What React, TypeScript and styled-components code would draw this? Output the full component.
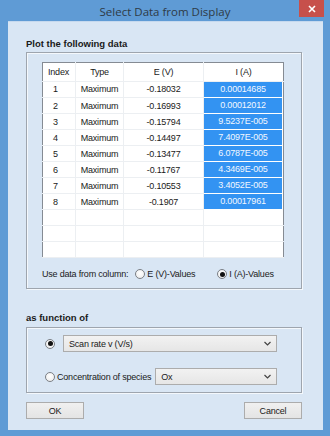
import React from "react";
import styled, { createGlobalStyle } from "styled-components";

const GlobalStyle = createGlobalStyle`
  html, body {
    margin: 0;
    padding: 0;
    background: #609bd6;
  }
  * {
    box-sizing: border-box;
  }
`;

const Window = styled.div`
  width: 330px;
  height: 436px;
  background: #5f9bd5;
  display: flex;
  flex-direction: column;
  font-family: "Liberation Sans", Arial, sans-serif;
  font-size: 9px;
  letter-spacing: -0.2px;
  color: #1a1a1a;
  white-space: nowrap;
`;

const TitleBar = styled.div`
  height: 23px;
  display: flex;
  align-items: flex-start;
  justify-content: center;
  position: relative;
`;

const Title = styled.div`
  font-family: "Open Sans", "Noto Sans", sans-serif;
  font-size: 11.5px;
  letter-spacing: 0;
  color: #2e3a46;
  padding-top: 4px;
`;

const CloseButton = styled.div`
  position: absolute;
  top: 0;
  right: 6px;
  width: 25px;
  height: 17px;
  background: #c7504b;
  color: #fff;
  display: flex;
  align-items: center;
  justify-content: center;
`;

const Content = styled.div`
  flex: 1;
  margin: 0 7px 6px 8px;
  background: #d9e6f4;
  border-top: 1px solid #c6d9ee;
  padding: 16px 21px 11px 18px;
  display: flex;
  flex-direction: column;
`;

const Label = styled.div<{ $gap: number; $top?: number }>`
  font-weight: bold;
  font-size: 9.5px;
  letter-spacing: 0;
  line-height: 12px;
  margin-top: ${(p) => p.$top || 0}px;
  margin-bottom: ${(p) => p.$gap}px;
`;

const GroupBox = styled.div<{ $pad: string }>`
  border: 1px solid #9ea5ae;
  box-shadow: inset 1px 1px 0 #f4f8fc, 1px 1px 0 #f4f8fc;
  padding: ${(p) => p.$pad};
`;

const Table = styled.table`
  border-collapse: collapse;
  background: #fff;
  border: 1px solid #858b93;
  table-layout: fixed;
  width: 241px;
`;

const Th = styled.th<{ $w: number; $align?: string }>`
  width: ${(p) => p.$w}px;
  height: 19px;
  font-weight: normal;
  text-align: ${(p) => p.$align || "center"};
  padding: 0 0 0 ${(p) => (p.$align === "left" ? 5 : 0)}px;
  border-right: 1px solid #eceff2;
  border-bottom: 1px solid #eceff2;
  &:last-child {
    border-right: none;
  }
`;

const Td = styled.td<{ $align?: string }>`
  height: 16px;
  padding: 0 0 0 ${(p) => (p.$align === "left" ? 10 : 0)}px;
  text-align: ${(p) => p.$align || "center"};
  border-right: 1px solid #eceff2;
  border-bottom: 1px solid #eceff2;
  &:last-child {
    border-right: none;
  }
`;

const SelCell = styled.td`
  height: 16px;
  padding: 0 1px 1px 0;
  border-bottom: none;
`;

const SelFill = styled.div`
  height: 15px;
  background: #3393f2;
  color: #f2f7ff;
  text-align: center;
  line-height: 15px;
`;

const ColumnRow = styled.div`
  display: flex;
  align-items: center;
  margin-top: 9px;
  height: 14px;
`;

const RadioLabel = styled.label<{ $ml?: number }>`
  display: flex;
  align-items: center;
  gap: 2px;
  flex-shrink: 0;
  margin-left: ${(p) => p.$ml || 0}px;
`;

const RadioCircle = styled.span<{ $checked?: boolean }>`
  width: 10px;
  height: 10px;
  border-radius: 50%;
  border: 1px solid #7b7f85;
  background: radial-gradient(circle at 50% 40%, #ffffff 0%, #eaeaea 100%);
  display: flex;
  align-items: center;
  justify-content: center;
  flex-shrink: 0;
  &::after {
    content: "";
    display: ${(p) => (p.$checked ? "block" : "none")};
    width: 5px;
    height: 5px;
    border-radius: 50%;
    background: #111;
  }
`;

const FuncRow = styled.div<{ $mt?: number }>`
  display: flex;
  align-items: center;
  margin-top: ${(p) => p.$mt || 0}px;
`;

const Combo = styled.div<{ $w: number; $ml: number }>`
  width: ${(p) => p.$w}px;
  height: 17px;
  flex-shrink: 0;
  margin-left: ${(p) => p.$ml}px;
  border: 1px solid #acacac;
  background: linear-gradient(#f2f2f2, #e6e6e6);
  display: flex;
  align-items: center;
  justify-content: space-between;
  padding: 0 5px 0 5px;
`;

const Buttons = styled.div`
  display: flex;
  justify-content: space-between;
  margin-top: 9px;
`;

const Button = styled.div`
  width: 58px;
  height: 17px;
  border: 1px solid #acacac;
  background: linear-gradient(#f0f0f0, #e4e4e4);
  display: flex;
  align-items: center;
  justify-content: center;
`;

const Chevron = () => (
  <svg width="7" height="5" viewBox="0 0 7 5">
    <polyline points="0.5,1 3.5,4 6.5,1" fill="none" stroke="#444" strokeWidth="1.2" />
  </svg>
);

const rows = [
  ["1", "-0.18032", "0.00014685"],
  ["2", "-0.16993", "0.00012012"],
  ["3", "-0.15794", "9.5237E-005"],
  ["4", "-0.14497", "7.4097E-005"],
  ["5", "-0.13477", "6.0787E-005"],
  ["6", "-0.11767", "4.3469E-005"],
  ["7", "-0.10553", "3.4052E-005"],
  ["8", "-0.1907", "0.00017961"],
];

const App = () => {
  return (
    <Window>
      <GlobalStyle />
      <TitleBar>
        <Title>Select Data from Display</Title>
        <CloseButton>
          <svg width="8" height="8" viewBox="0 0 8 8">
            <path d="M1 1 L7 7 M7 1 L1 7" stroke="#fff" strokeWidth="1.6" />
          </svg>
        </CloseButton>
      </TitleBar>
      <Content>
        <Label $gap={2}>Plot the following data</Label>
        <GroupBox $pad="9px 18px 7px 15px">
          <Table>
            <thead>
              <tr>
                <Th $w={33} $align="left">Index</Th>
                <Th $w={48}>Type</Th>
                <Th $w={80}>E (V)</Th>
                <Th $w={80}>I (A)</Th>
              </tr>
            </thead>
            <tbody>
              {rows.map((r) => (
                <tr key={r[0]}>
                  <Td $align="left">{r[0]}</Td>
                  <Td>Maximum</Td>
                  <Td>{r[1]}</Td>
                  <SelCell>
                    <SelFill>{r[2]}</SelFill>
                  </SelCell>
                </tr>
              ))}
              {[0, 1, 2].map((i) => (
                <tr key={"e" + i}>
                  <Td />
                  <Td />
                  <Td />
                  <Td />
                </tr>
              ))}
            </tbody>
          </Table>
          <ColumnRow>
            Use data from column:
            <RadioLabel $ml={7}>
              <RadioCircle />
              E (V)-Values
            </RadioLabel>
            <RadioLabel $ml={22}>
              <RadioCircle $checked />
              I (A)-Values
            </RadioLabel>
          </ColumnRow>
        </GroupBox>
        <Label $gap={3} $top={23}>
          as function of
        </Label>
        <GroupBox $pad="7px 24px 7px 18px">
          <FuncRow>
            <RadioCircle $checked />
            <Combo $w={214} $ml={8}>
              Scan rate v (V/s)
              <Chevron />
            </Combo>
          </FuncRow>
          <FuncRow $mt={16}>
            <RadioLabel>
              <RadioCircle />
              Concentration of species
            </RadioLabel>
            <Combo $w={122} $ml={4}>
              Ox
              <Chevron />
            </Combo>
          </FuncRow>
        </GroupBox>
        <Buttons>
          <Button>OK</Button>
          <Button>Cancel</Button>
        </Buttons>
      </Content>
    </Window>
  );
};

export default App;
